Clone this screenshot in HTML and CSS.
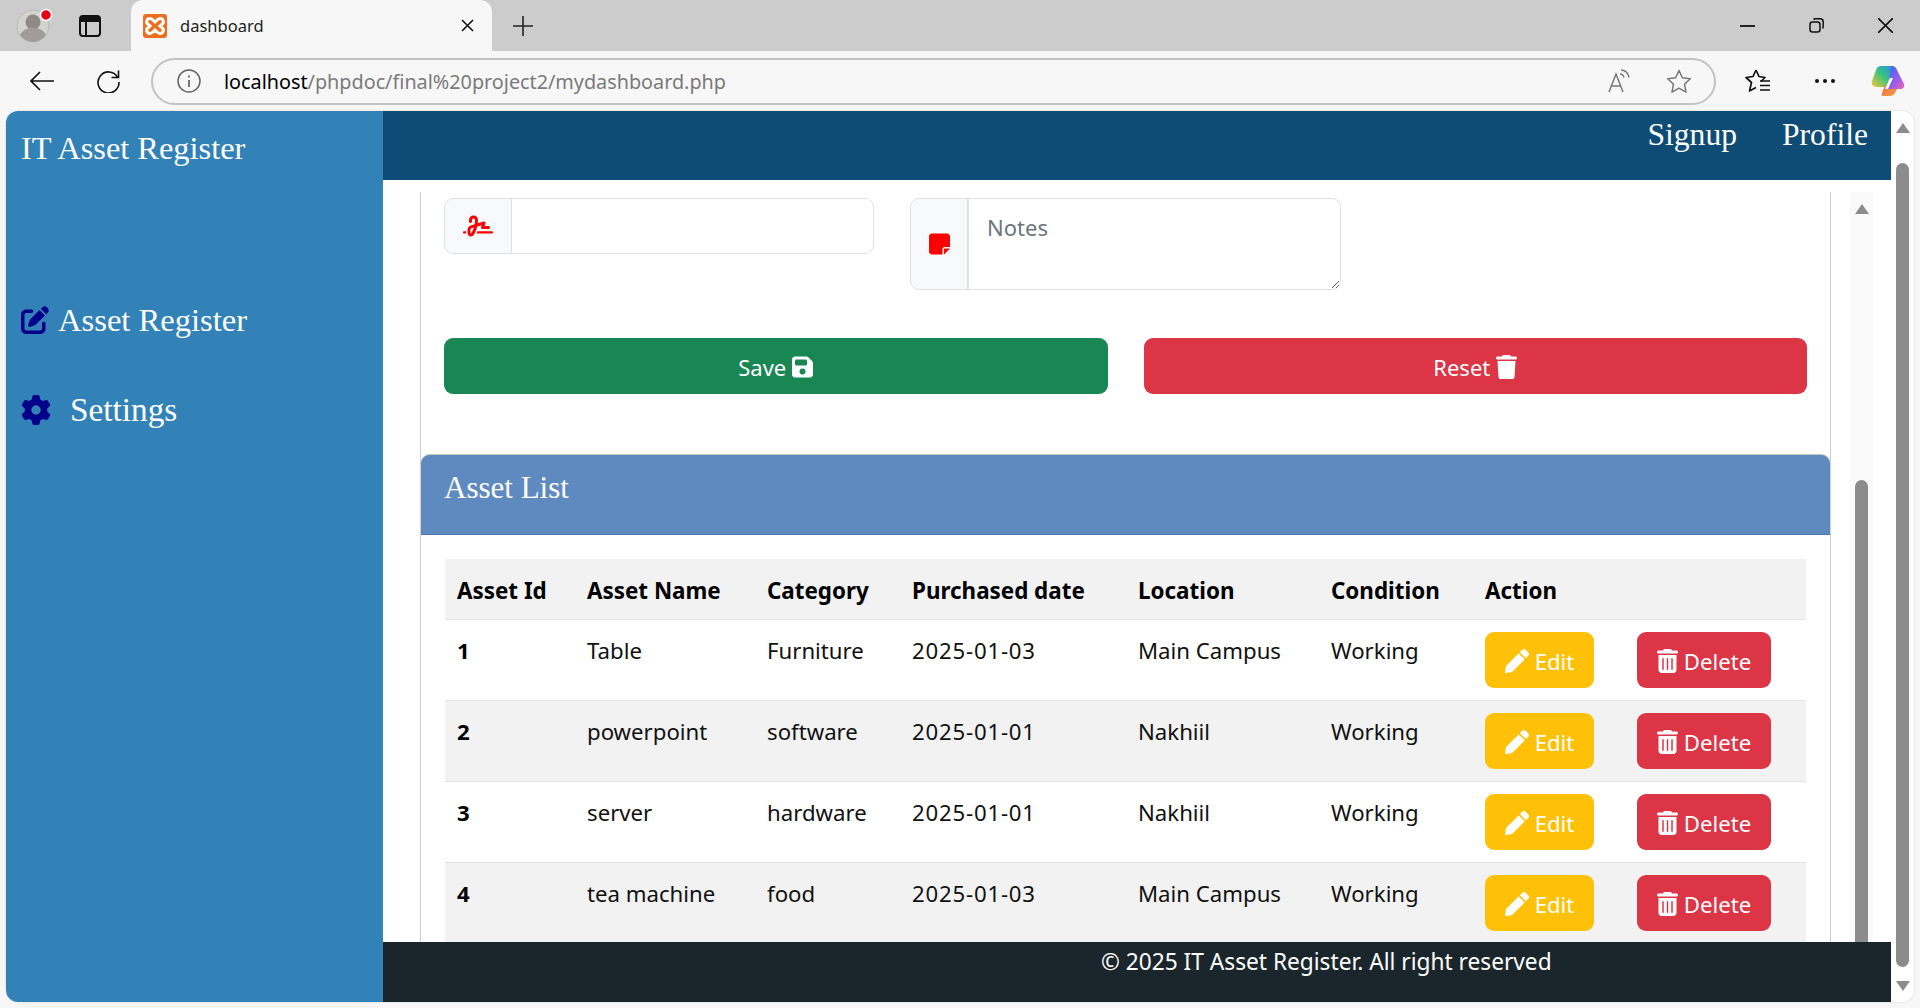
FILE: index.html
```html
<!DOCTYPE html>
<html lang="en">
<head>
<meta charset="utf-8">
<title>dashboard</title>
<link rel="stylesheet" href="styles.css">
</head>
<body>
<svg class="defs" width="0" height="0" aria-hidden="true">
  <symbol id="i-pen" viewBox="0 0 512 512"><path d="M497.900 142.100l-46.100 46.100c-4.700 4.700-12.300 4.700-17 0l-111-111c-4.700-4.700-4.700-12.300 0-17l46.100-46.100c18.700-18.700 49.100-18.700 67.900 0l60.100 60.100c18.800 18.700 18.800 49.100 0 67.900zM284.200 99.800L21.600 362.400.4 483.900c-2.900 16.400 11.400 30.600 27.800 27.800l121.500-21.300 262.600-262.600c4.700-4.700 4.700-12.300 0-17l-111-111c-4.800-4.700-12.400-4.700-17.100 0z"/></symbol>
  <symbol id="i-trash" viewBox="0 0 448 512"><path d="M135.200 17.700C140.600 6.800 151.700 0 163.800 0H284.200c12.100 0 23.200 6.800 28.600 17.700L320 32h96c17.700 0 32 14.300 32 32s-14.300 32-32 32H32C14.300 96 0 81.700 0 64S14.300 32 32 32h96l7.200-14.300zM32 128H416V448c0 35.300-28.700 64-64 64H96c-35.300 0-64-28.700-64-64V128zm96 64c-8.800 0-16 7.200-16 16V432c0 8.800 7.200 16 16 16s16-7.200 16-16V208c0-8.800-7.200-16-16-16zm96 0c-8.800 0-16 7.200-16 16V432c0 8.800 7.200 16 16 16s16-7.200 16-16V208c0-8.800-7.200-16-16-16zm96 0c-8.800 0-16 7.200-16 16V432c0 8.800 7.200 16 16 16s16-7.200 16-16V208c0-8.800-7.200-16-16-16z"/></symbol>
</svg>
<div class="tabstrip">
  <div class="avatar">
    <svg width="40" height="40" viewBox="0 0 40 40"><circle cx="20" cy="20" r="16" fill="#d5d3cf" stroke="#bdbbb7"/><circle cx="20" cy="16" r="7.5" fill="#8e8a85"/><path d="M7 29c3-6 8-7 13-7s10 1 13 7c-3 4-8 7-13 7s-10-3-13-7z" fill="#a09c97"/><circle cx="33" cy="9" r="5.5" fill="#e60012" stroke="#fff" stroke-width="1.5"/></svg>
  </div>
  <svg class="tabs-ico" width="22" height="22" viewBox="0 0 22 22" fill="none" stroke="#111" stroke-width="2"><rect x="1" y="1" width="20" height="20" rx="3"/><path d="M1 4.500h20" stroke-width="5"/><path d="M7 6v15"/></svg>
  <div class="tab">
    <svg class="favicon" width="24" height="24" viewBox="0 0 24 24"><rect width="24" height="24" rx="3" fill="#ea6f1f"/><path d="M7 4.500a3.200 3.200 0 0 0-2 5.800l2 1.700-2 1.700a3.200 3.200 0 0 0 2 5.800c1.800 0 3-1.500 5-3.500 2 2 3.200 3.500 5 3.500a3.200 3.200 0 0 0 2-5.800L17 12l2-1.700a3.200 3.200 0 0 0-2-5.800c-1.800 0-3 1.500-5 3.500-2-2-3.200-3.500-5-3.500z" fill="none" stroke="#fff" stroke-width="3"/></svg>
    <span class="tab-title">dashboard</span>
    <svg class="tab-x" width="13" height="13" viewBox="0 0 13 13" stroke="#111" stroke-width="1.600"><path d="M1 1l11 11M12 1L1 12"/></svg>
  </div>
  <svg class="plus" width="20" height="20" viewBox="0 0 20 20" stroke="#222" stroke-width="1.600"><path d="M10 0v20M0 10h20"/></svg>
  <div class="winctl">
    <svg width="15" height="15" viewBox="0 0 15 15" stroke="#111" stroke-width="1.800"><path d="M0 8h15"/></svg>
    <svg width="15" height="15" viewBox="0 0 15 15" fill="none" stroke="#111" stroke-width="1.500"><rect x="1" y="4" width="10" height="10" rx="2.500"/><path d="M4.500 1.500c.5-.6 1-.8 2-.8h4.500c2 0 3.200 1.200 3.200 3.200v4.500c0 1-.2 1.500-.8 2"/></svg>
    <svg width="15" height="15" viewBox="0 0 15 15" stroke="#111" stroke-width="1.600"><path d="M0 0l15 15M15 0L0 15"/></svg>
  </div>
</div>

<div class="toolbar">
  <svg class="tb-back" width="24" height="20" viewBox="0 0 24 20" fill="none" stroke="#111" stroke-width="1.600"><path d="M24 10H1M10 1l-9 9 9 9"/></svg>
  <svg class="tb-reload" width="24" height="24" viewBox="0 0 24 24" fill="none" stroke="#111" stroke-width="1.600"><path d="M21.500 8A10.500 10.500 0 1 0 23 13"/><path d="M22.500 1.500V8.500H15.500"/></svg>
  <div class="address">
    <svg class="addr-info" width="24" height="24" viewBox="0 0 24 24" fill="none" stroke="#666" stroke-width="1.500"><circle cx="12" cy="12" r="11"/><path d="M12 11v7M12 6.500v2" stroke-width="1.800"/></svg>
    <span class="url"><span class="url-host">localhost</span>/phpdoc/final%20project2/mydashboard.php</span>
    <svg class="addr-read" width="24" height="24" viewBox="0 0 24 24" fill="none" stroke="#777" stroke-width="1.500"><path d="M1 23L8 5l7 18M3.500 17h9"/><path d="M12 5c2 0 3.500 1.500 4 3.500M13 1c4 0 7 3 8 7.500" stroke-width="1.400"/></svg>
    <svg class="addr-star" width="26" height="24" viewBox="0 0 26 24" fill="none" stroke="#777" stroke-width="1.500" stroke-linejoin="round"><path d="M13 1.500l3.400 7.300 7.900 1-5.800 5.400 1.500 7.900-7-3.900-7 3.900 1.500-7.900L1.700 9.800l7.900-1z"/></svg>
  </div>
  <svg class="tb-fav" width="26" height="26" viewBox="0 0 26 26" fill="none" stroke="#111" stroke-width="1.700" stroke-linejoin="round"><path d="M11 2l3 6.500 6 1-4 4M11 2L8 8.500l-7 1 5.500 5-2 8.500 6.500-3.500"/><path d="M15 13h10M15 17.500h10M15 22h10"/></svg>
  <svg class="tb-more" width="20" height="4" viewBox="0 0 20 4" fill="#111"><circle cx="2" cy="2" r="2"/><circle cx="10" cy="2" r="2"/><circle cx="18" cy="2" r="2"/></svg>
  <svg class="tb-copilot" width="34" height="32" viewBox="0 0 34 32">
    <defs>
      <linearGradient id="cpa" x1="0" y1="1" x2="1" y2="0"><stop offset="0" stop-color="#f8c630"/><stop offset=".5" stop-color="#3fc47a"/><stop offset="1" stop-color="#1f8df0"/></linearGradient>
      <linearGradient id="cpb" x1="0" y1="0" x2="1" y2="1"><stop offset="0" stop-color="#2f6cf0"/><stop offset=".6" stop-color="#a05be8"/><stop offset="1" stop-color="#e86ab0"/></linearGradient>
      <linearGradient id="cpc" x1="0" y1="0" x2="1" y2="1"><stop offset="0" stop-color="#f2694a"/><stop offset="1" stop-color="#f0a040"/></linearGradient>
    </defs>
    <path d="M10 1h13l-7 21H6c-4 0-6-3-5-6l4-11c1-3 3-4 5-4z" fill="url(#cpa)"/>
    <path d="M20 1h1c2 0 4 1 5 4l7 14c1 3-1 5-4 5H17z" fill="url(#cpb)"/>
    <path d="M17 24h9l-2 4c-1 2-3 3-5 3h-7c-1 0-2-1-1-3l3-8z" fill="url(#cpc)"/>
    <path d="M19 13l3 0-5 11-3 0z" fill="#fff"/>
  </svg>
</div>

<div class="page">
  <aside class="sidebar">
    <div class="brand">IT Asset Register</div>
    <a class="side-link side-asset">
      <svg class="side-ico" width="28" height="28" viewBox="0 0 512 512"><path d="M471.600 21.700c-21.900-21.900-57.300-21.900-79.200 0L362.300 51.700l97.900 97.900 30.100-30.100c21.900-21.900 21.900-57.300 0-79.200L471.600 21.700zm-299.200 220c-6.100 6.100-10.800 13.600-13.500 21.900l-29.600 88.800c-2.900 8.600-.6 18.100 5.800 24.600s15.900 8.700 24.600 5.800l88.800-29.600c8.200-2.700 15.700-7.400 21.900-13.500L437.700 172.300 339.700 74.300 172.400 241.700zM96 64C43 64 0 107 0 160V416c0 53 43 96 96 96H352c53 0 96-43 96-96V320c0-17.700-14.300-32-32-32s-32 14.300-32 32v96c0 17.700-14.300 32-32 32H96c-17.700 0-32-14.300-32-32V160c0-17.700 14.300-32 32-32h96c17.700 0 32-14.300 32-32s-14.300-32-32-32H96z"/></svg>
      <span>Asset Register</span>
    </a>
    <a class="side-link side-settings">
      <svg class="side-ico" width="30" height="30" viewBox="0 0 512 512"><path d="M495.900 166.600c3.200 8.700 .5 18.400-6.400 24.600l-43.300 39.400c1.100 8.300 1.700 16.800 1.700 25.400s-.6 17.100-1.700 25.400l43.300 39.400c6.900 6.200 9.600 15.900 6.400 24.600c-4.400 11.900-9.700 23.300-15.800 34.300l-4.700 8.100c-6.600 11-14 21.400-22.100 31.200c-5.900 7.200-15.700 9.600-24.500 6.800l-55.700-17.700c-13.400 10.300-28.200 18.900-44 25.400l-12.500 57.100c-2 9.100-9 16.300-18.200 17.800c-13.800 2.300-28 3.500-42.500 3.500s-28.700-1.200-42.500-3.500c-9.200-1.500-16.200-8.700-18.200-17.800l-12.500-57.100c-15.800-6.500-30.600-15.100-44-25.400L83.100 425.900c-8.800 2.800-18.600 .3-24.500-6.800c-8.100-9.800-15.500-20.200-22.100-31.200l-4.700-8.100c-6.100-11-11.400-22.400-15.800-34.300c-3.200-8.700-.5-18.400 6.400-24.600l43.300-39.400C64.600 273.100 64 264.600 64 256s.6-17.100 1.700-25.400L22.400 191.200c-6.900-6.200-9.600-15.900-6.400-24.600c4.400-11.900 9.700-23.300 15.800-34.300l4.700-8.100c6.600-11 14-21.400 22.100-31.200c5.900-7.200 15.700-9.600 24.500-6.800l55.700 17.700c13.400-10.300 28.200-18.900 44-25.400l12.500-57.100c2-9.100 9-16.300 18.200-17.800C227.300 1.200 241.500 0 256 0s28.700 1.200 42.500 3.500c9.200 1.500 16.200 8.700 18.200 17.800l12.500 57.100c15.800 6.500 30.600 15.100 44 25.400l55.700-17.700c8.800-2.800 18.600-.3 24.500 6.800c8.100 9.800 15.500 20.200 22.100 31.200l4.700 8.100c6.100 11 11.400 22.400 15.800 34.300zM256 336a80 80 0 1 0 0-160 80 80 0 1 0 0 160z"/></svg>
      <span>Settings</span>
    </a>
  </aside>

  <div class="main">
    <header class="topnav">
      <a class="nav-link">Signup</a>
      <a class="nav-link">Profile</a>
    </header>

    <div class="content">
      <div class="pane">
        <form class="form">
          <div class="form-row">
            <div class="group group-input">
              <span class="addon addon-sign">
                <svg width="30" height="24" viewBox="0 0 640 512" fill="#f00"><path d="M192 128c0-17.700 14.300-32 32-32s32 14.300 32 32v7.800c0 27.700-2.400 55.300-7.100 82.500l-84.400 25.300c-40.600 12.200-68.400 49.600-68.400 92v71.900c0 40 32.500 72.500 72.500 72.500c26 0 50-13.900 62.900-36.500l13.900-24.300c26.800-47 46.500-97.700 58.400-150.500l94.400-28.300-12.500 37.500c-3.300 9.800-1.600 20.500 4.400 28.800s15.700 13.300 26 13.300H544c17.700 0 32-14.300 32-32s-14.300-32-32-32H460.400l18-53.900c3.800-11.300 .9-23.800-7.400-32.400s-20.700-11.800-32.200-8.400L316.400 198.100c2.400-20.700 3.600-41.400 3.600-62.300V128c0-53-43-96-96-96s-96 43-96 96v32c0 17.700 14.300 32 32 32s32-14.300 32-32V128zm-9.200 177l49-14.700c-10.400 33.800-24.500 66.400-42.100 97.200l-13.900 24.300c-1.500 2.600-4.300 4.300-7.400 4.300c-4.700 0-8.500-3.800-8.500-8.500V335.600c0-14.100 9.300-26.600 22.800-30.700zM24 368c-13.300 0-24 10.700-24 24s10.700 24 24 24H64.300c-.2-2.800-.3-5.600-.3-8.500V368H24zm592 48c13.300 0 24-10.700 24-24s-10.700-24-24-24H305.900c-6.700 16.300-14.200 32.300-22.300 48H616z"/></svg>
              </span>
              <input class="field" type="text" aria-label="Signature">
            </div>
            <div class="group group-notes">
              <span class="addon addon-note">
                <svg width="21" height="24" viewBox="0 0 448 512" fill="#f00"><path d="M64 32C28.700 32 0 60.700 0 96V416c0 35.300 28.700 64 64 64H288V368c0-26.500 21.500-48 48-48H448V96c0-35.300-28.700-64-64-64H64zM448 352H402.700 336c-8.800 0-16 7.200-16 16v66.700V480l32-32 64-64 32-32z"/></svg>
              </span>
              <textarea class="field field-notes" placeholder="Notes"></textarea>
            </div>
          </div>
          <div class="actions">
            <button class="btn btn-save" type="button"><span>Save</span>
              <svg width="21" height="24" viewBox="0 0 448 512" fill="#fff"><path d="M64 32C28.700 32 0 60.700 0 96V416c0 35.300 28.700 64 64 64H384c35.300 0 64-28.700 64-64V173.300c0-17-6.700-33.300-18.700-45.300L352 50.700C340 38.700 323.700 32 306.700 32H64zm0 96c0-17.700 14.300-32 32-32H288c17.700 0 32 14.300 32 32v64c0 17.700-14.300 32-32 32H96c-17.700 0-32-14.300-32-32V128zM224 288a64 64 0 1 1 0 128 64 64 0 1 1 0-128z"/></svg>
            </button>
            <button class="btn btn-reset" type="button"><span>Reset</span>
              <svg width="21" height="24" viewBox="0 0 448 512" fill="#fff"><path d="M135.200 17.700L128 32H32C14.300 32 0 46.300 0 64S14.300 96 32 96H416c17.700 0 32-14.300 32-32s-14.300-32-32-32H320l-7.200-14.300C307.400 6.800 296.300 0 284.200 0H163.800c-12.100 0-23.200 6.800-28.600 17.700zM416 128H32L53.200 467c1.600 25.300 22.600 45 47.900 45H346.900c25.300 0 46.300-19.700 47.900-45L416 128z"/></svg>
            </button>
          </div>
        </form>

        <section class="card">
          <div class="card-head">Asset List</div>
          <div class="card-body">
            <table class="assets">
              <colgroup>
                <col class="c1"><col class="c2"><col class="c3"><col class="c4"><col class="c5"><col class="c6"><col class="c7"><col class="c8">
              </colgroup>
              <thead>
                <tr><th>Asset Id</th><th>Asset Name</th><th>Category</th><th>Purchased date</th><th>Location</th><th>Condition</th><th>Action</th><th></th></tr>
              </thead>
              <tbody>
                <tr>
                  <td class="id">1</td><td>Table</td><td>Furniture</td><td class="date">2025-01-03</td><td>Main Campus</td><td>Working</td>
                  <td class="cell-act"><button class="act act-edit" type="button"><svg width="24" height="24" fill="#fff"><use href="#i-pen"/></svg>Edit</button></td>
                  <td class="cell-act"><button class="act act-del" type="button"><svg width="21" height="24" fill="#fff"><use href="#i-trash"/></svg>Delete</button></td>
                </tr>
                <tr>
                  <td class="id">2</td><td>powerpoint</td><td>software</td><td class="date">2025-01-01</td><td>Nakhiil</td><td>Working</td>
                  <td class="cell-act"><button class="act act-edit" type="button"><svg width="24" height="24" fill="#fff"><use href="#i-pen"/></svg>Edit</button></td>
                  <td class="cell-act"><button class="act act-del" type="button"><svg width="21" height="24" fill="#fff"><use href="#i-trash"/></svg>Delete</button></td>
                </tr>
                <tr>
                  <td class="id">3</td><td>server</td><td>hardware</td><td class="date">2025-01-01</td><td>Nakhiil</td><td>Working</td>
                  <td class="cell-act"><button class="act act-edit" type="button"><svg width="24" height="24" fill="#fff"><use href="#i-pen"/></svg>Edit</button></td>
                  <td class="cell-act"><button class="act act-del" type="button"><svg width="21" height="24" fill="#fff"><use href="#i-trash"/></svg>Delete</button></td>
                </tr>
                <tr>
                  <td class="id">4</td><td>tea machine</td><td>food</td><td class="date">2025-01-03</td><td>Main Campus</td><td>Working</td>
                  <td class="cell-act"><button class="act act-edit" type="button"><svg width="24" height="24" fill="#fff"><use href="#i-pen"/></svg>Edit</button></td>
                  <td class="cell-act"><button class="act act-del" type="button"><svg width="21" height="24" fill="#fff"><use href="#i-trash"/></svg>Delete</button></td>
                </tr>
              </tbody>
            </table>
          </div>
        </section>
      </div>
      <div class="inner-scroll">
        <span class="arrow-up"></span>
        <span class="inner-thumb"></span>
      </div>
    </div>

    <footer class="footer">© 2025 IT Asset Register. All right reserved</footer>
  </div>

  <div class="page-scroll">
    <span class="arrow-up"></span>
    <span class="page-thumb"></span>
    <span class="arrow-down"></span>
  </div>
</div>
</body>
</html>
```

FILE: styles.css
```css
* { box-sizing: border-box; }
html, body { margin: 0; height: 100%; }
body {
  background: #f7f7f7;
  font-family: "Noto Sans", "Open Sans", sans-serif;
  font-size: 22px;
  color: #000;
  overflow: hidden;
}
svg { display: block; flex: none; }
.defs { position: absolute; }

/* browser chrome */
.tabstrip {
  height: 51px;
  background: #cccccc;
  display: flex;
  align-items: center;
}
.avatar { margin-left: 13px; width: 40px; height: 40px; }
.tabs-ico { margin-left: 26px; }
.tab {
  margin-left: 30px;
  width: 361px;
  height: 51px;
  background: #f7f7f7;
  border-radius: 12px 12px 0 0;
  display: flex;
  align-items: center;
  padding: 0 18px 0 12px;
}
.tab-title { margin-left: 13px; font-size: 16.5px; color: #222; flex: 1; }
.plus { margin-left: 21px; }
.winctl { margin-left: auto; display: flex; gap: 54px; padding-right: 27px; }

.toolbar {
  height: 60px;
  display: flex;
  align-items: center;
  background: #f7f7f7;
}
.tb-back { margin-left: 30px; }
.tb-reload { margin-left: 42px; }
.address {
  margin-left: 31px;
  width: 1565px;
  height: 47px;
  border: 2px solid #c3c3c3;
  border-radius: 24px;
  display: flex;
  align-items: center;
  background: #f7f7f7;
}
.addr-info { margin-left: 24px; }
.url { margin-left: 23px; font-size: 19.8px; color: #7a7a7a; flex: 1; white-space: nowrap; }
.url-host { color: #000; }
.addr-star { margin-left: 34px; margin-right: 22px; }
.tb-fav { margin-left: 29px; }
.tb-more { margin-left: 44px; }
.tb-copilot { margin-left: 36px; }

/* page */
.page {
  margin: 0 6px;
  height: 891px;
  display: flex;
  border-radius: 12px;
  overflow: hidden;
  background: #fff;
  box-shadow: 0 0 2px rgba(0,0,0,.2);
}
.sidebar {
  width: 377px;
  flex: none;
  background: #3282b8;
  color: #fff;
  font-family: "Liberation Serif", serif;
  font-size: 33px;
  padding: 17px 15px 0;
}
.brand { line-height: 40px; font-size: 32.4px; }
.side-link { display: flex; align-items: center; line-height: 40px; }
.side-asset { margin-top: 132px; gap: 9px; font-size: 32.6px; }
.side-settings { margin-top: 50px; gap: 19px; font-size: 33.3px; }
.side-ico { fill: #00008b; }

.main { flex: 1; min-width: 0; display: flex; flex-direction: column; }
.topnav {
  height: 69px;
  flex: none;
  background: #0f4c75;
  color: #fff;
  font-family: "Liberation Serif", serif;
  font-size: 31.6px;
  display: flex;
  justify-content: flex-end;
  gap: 45px;
  padding: 4px 23px 0 0;
  line-height: 40px;
}
.content {
  flex: 1;
  min-height: 0;
  display: flex;
  overflow: hidden;
  background: #fff;
}
.pane {
  margin: 12px 0 0 37px;
  width: 1411px;
  border-left: 1px solid #cfcfcf;
  border-right: 1px solid #cfcfcf;
  flex: none;
}
.form { padding: 6px 23px 0; }
.form-row { display: flex; gap: 36px; align-items: flex-start; }
.group { display: flex; width: 430px; }
.group-notes { width: 431px; }
.addon {
  background: #f8f9fa;
  border: 1px solid #dee2e6;
  border-radius: 9px 0 0 9px;
  display: flex;
  align-items: center;
  justify-content: center;
  flex: none;
}
.addon-sign { width: 68px; height: 56px; }
.addon-note { width: 58px; height: 92px; }
.field {
  flex: 1;
  min-width: 0;
  border: 1px solid #dee2e6;
  border-left: 0;
  border-radius: 0 9px 9px 0;
  background: #fff;
  font-family: inherit;
  font-size: 22px;
  outline: none;
}
.group-input .field { height: 56px; }
.field-notes { height: 92px; padding: 13px 18px; color: #212529; resize: vertical; border-left: 1px solid #dee2e6; }
.field-notes::placeholder { color: #6c757d; opacity: 1; }

.actions { display: flex; gap: 36px; margin-top: 48px; }
.btn {
  flex: 1;
  height: 56px;
  border: 0;
  border-radius: 9px;
  color: #fff;
  font-family: inherit;
  font-size: 22px;
  display: flex;
  align-items: center;
  justify-content: center;
  gap: 6px;
  padding: 1px 0 0;
}
.btn-save { background: #198754; }
.btn-reset { background: #dc3545; }

.card { margin-top: 60px; }
.card-head {
  height: 81px;
  background: #5f8abf;
  border-top: 1px solid #c4c4c4;
  border-bottom: 1px solid #4e77a8;
  border-radius: 9px 9px 0 0;
  color: #fff;
  font-family: "Liberation Serif", serif;
  font-size: 31px;
  line-height: 40px;
  padding: 13px 23px 0;
}
.card-body { padding: 24px 24px 0; }
.assets { width: 1361px; table-layout: fixed; border-collapse: collapse; }
.c1 { width: 130px; } .c2 { width: 180px; } .c3 { width: 145px; } .c4 { width: 226px; }
.c5 { width: 193px; } .c6 { width: 154px; } .c7 { width: 152px; } .c8 { width: 181px; }
.assets th, .assets td {
  padding: 13px 12px 11px;
  line-height: 36px;
  text-align: left;
  vertical-align: top;
  font-size: 22.2px;
  white-space: nowrap;
  border-bottom: 1px solid #dee2e6;
}
.assets th { background: #f2f2f2; font-weight: 700; height: 60px; font-size: 22.4px; padding-top: 14px; padding-bottom: 10px; }
.assets td { height: 81px; color: #111; }
.assets td.cell-act { padding-top: 12px; padding-bottom: 12px; }
.assets td.id { font-weight: 700; color: #000; }
.assets td.date { letter-spacing: .8px; }
.assets tbody tr:nth-child(even) td { background: #f2f2f2; }
.act {
  height: 56px;
  border: 0;
  border-radius: 9px;
  color: #fff;
  font-family: inherit;
  font-size: 22.2px;
  display: flex;
  align-items: center;
  justify-content: center;
  gap: 6px;
  padding: 2px 0 0;
}
.act-edit { width: 109px; background: #ffc107; }
.act-del { width: 134px; background: #dc3545; }

/* scrollbars */
.inner-scroll {
  margin: 12px 0 0 19px;
  width: 23px;
  flex: none;
  background: #fafafa;
  display: flex;
  flex-direction: column;
  align-items: center;
}
.arrow-up {
  display: block;
  flex: none;
  width: 0; height: 0;
  border-left: 7px solid transparent;
  border-right: 7px solid transparent;
  border-bottom: 10px solid #8c8c8c;
}
.arrow-down {
  display: block;
  flex: none;
  width: 0; height: 0;
  border-left: 7px solid transparent;
  border-right: 7px solid transparent;
  border-top: 10px solid #8c8c8c;
}
.inner-scroll .arrow-up { margin-top: 12px; }
.inner-thumb {
  display: block;
  flex: 1;
  width: 13px;
  margin-top: 266px;
  background: #8c8c8c;
  border-radius: 7px 7px 0 0;
}
.page-scroll {
  width: 23px;
  flex: none;
  background: #fff;
  display: flex;
  flex-direction: column;
  align-items: center;
}
.page-scroll .arrow-up { margin-top: 12px; }
.page-thumb {
  display: block;
  width: 13px;
  height: 804px;
  margin-top: 30px;
  background: #8c8c8c;
  border-radius: 7px;
}
.page-scroll .arrow-down { margin-top: 14px; }

.footer {
  height: 60px;
  flex: none;
  background: #1b262c;
  color: #fff;
  font-size: 22.7px;
  line-height: 36px;
  padding: 2px 0 0 718px;
}
```
